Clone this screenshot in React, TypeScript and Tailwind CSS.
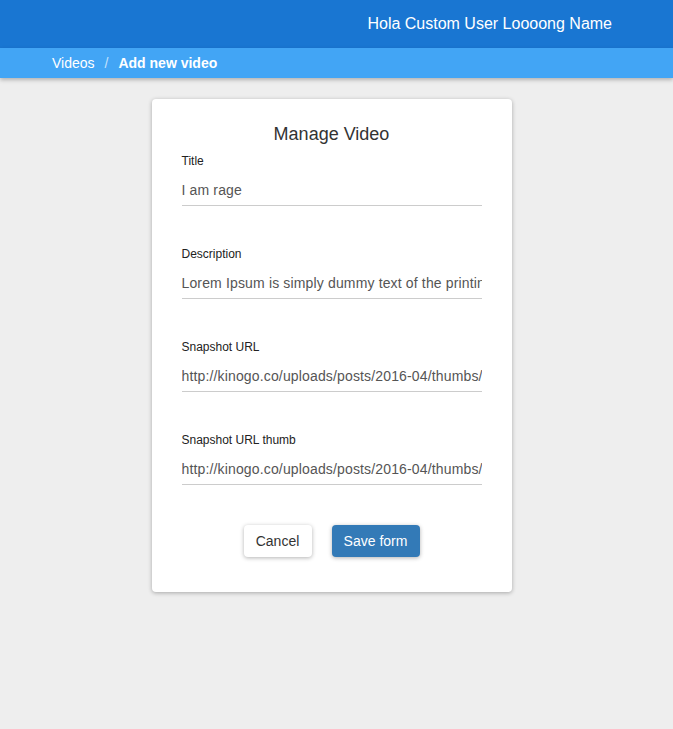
import { useState } from 'react';

const fields = [
  { name: 'title', label: 'Title', value: 'I am rage' },
  {
    name: 'description',
    label: 'Description',
    value: 'Lorem Ipsum is simply dummy text of the printing and typesetting industry.'
  },
  {
    name: 'snapshot',
    label: 'Snapshot URL',
    value: 'http://kinogo.co/uploads/posts/2016-04/thumbs/1460980312_poster.jpg'
  },
  {
    name: 'snapshotThumb',
    label: 'Snapshot URL thumb',
    value: 'http://kinogo.co/uploads/posts/2016-04/thumbs/1460980312_poster-thumb.jpg'
  }
];

const App = () => {
  const [values, setValues] = useState<Record<string, string>>(
    Object.fromEntries(fields.map((f) => [f.name, f.value]))
  );

  return (
    <div className="min-h-[729px] bg-[#eeeeee] font-['Liberation_Sans',Arial,sans-serif]">
      <header className="flex h-12 items-center justify-end bg-[#1976d2] pr-[61px] text-base text-white">
        Hola Custom User Loooong Name
      </header>
      <div className="flex h-[30px] items-center bg-[#42a5f5] pl-[52px] text-sm text-white shadow-[0_2px_4px_rgba(0,0,0,0.25)]">
        <span>Videos</span>
        <span className="mx-[10px] text-white/70">/</span>
        <span className="font-bold">Add new video</span>
      </div>

      <div className="flex justify-center pt-[21px]">
        <form
          className="ml-[-10px] w-[360px] rounded-[4px] bg-white px-[30px] pt-[23px] pb-[35px] shadow-[0_1px_4px_rgba(0,0,0,0.3)]"
          onSubmit={(e) => e.preventDefault()}>
          <h2 className="h-6 text-center text-lg leading-6 text-[#333]">Manage Video</h2>
          <div className="mt-[7px] flex flex-col gap-10">
            {fields.map((f) => (
              <div key={f.name} className="flex flex-col">
                <label className="h-4 text-xs leading-4 text-[#222]">{f.label}</label>
                <input
                  className="mt-[5px] h-8 w-full border-b border-[#cccccc] bg-transparent text-sm tracking-[0.15px] text-[#555] outline-none"
                  value={values[f.name]}
                  onChange={(e) => setValues({ ...values, [f.name]: e.target.value })}
                />
              </div>
            ))}
          </div>
          <div className="mt-10 flex justify-center gap-5">
            <button
              type="button"
              className="h-8 w-[68px] rounded-[4px] bg-white text-sm text-[#333] shadow-[0_1px_4px_rgba(0,0,0,0.3)]">
              Cancel
            </button>
            <button
              type="submit"
              className="h-8 w-[88px] rounded-[4px] bg-[#337ab7] text-sm text-white shadow-[0_1px_4px_rgba(0,0,0,0.3)]">
              Save form
            </button>
          </div>
        </form>
      </div>
    </div>
  );
};

export default App;
